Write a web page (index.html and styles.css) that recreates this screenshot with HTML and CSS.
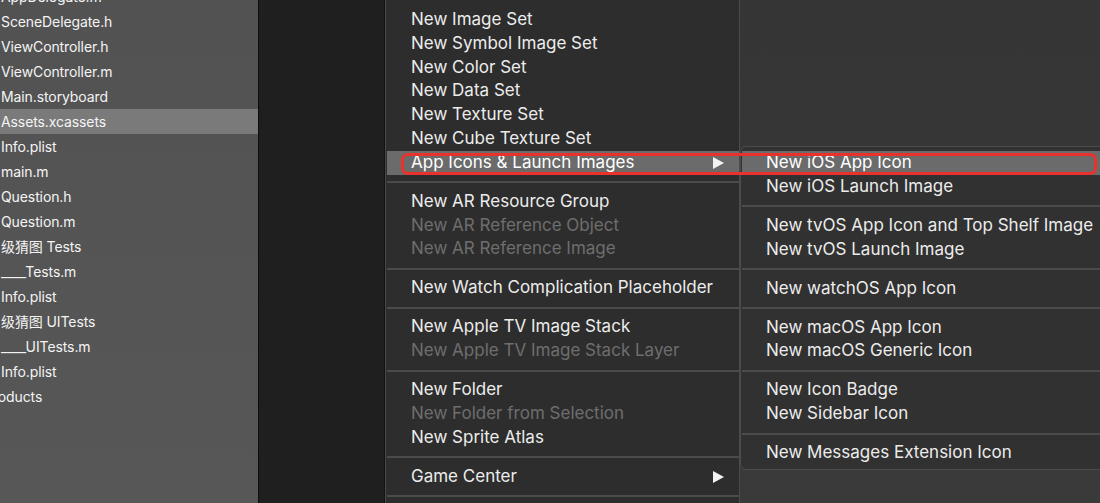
FILE: index.html
```html
<!DOCTYPE html>
<html lang="en">
<head>
<meta charset="utf-8">
<title>Xcode asset catalog context menu</title>
<link rel="stylesheet" href="styles.css">
</head>
<body>
<div class="screen">
  <aside class="sidebar">
    <ul class="files">
      <li class="file">AppDelegate.m</li>
      <li class="file">SceneDelegate.h</li>
      <li class="file">ViewController.h</li>
      <li class="file">ViewController.m</li>
      <li class="file">Main.storyboard</li>
      <li class="file selected">Assets.xcassets</li>
      <li class="file">Info.plist</li>
      <li class="file">main.m</li>
      <li class="file">Question.h</li>
      <li class="file">Question.m</li>
      <li class="file">级猜图 Tests</li>
      <li class="file">____Tests.m</li>
      <li class="file">Info.plist</li>
      <li class="file">级猜图 UITests</li>
      <li class="file">____UITests.m</li>
      <li class="file">Info.plist</li>
      <li class="file"><span class="cut">Products</span></li>
    </ul>
  </aside>
  <div class="divider"></div>
  <div class="gutter"></div>
  <div class="menu">
    <div class="item">New Image Set</div>
    <div class="item">New Symbol Image Set</div>
    <div class="item">New Color Set</div>
    <div class="item">New Data Set</div>
    <div class="item">New Texture Set</div>
    <div class="item">New Cube Texture Set</div>
    <div class="item active"><span>App Icons &amp; Launch Images</span><svg class="arrow" width="11" height="12" viewBox="0 0 11 12"><path d="M0 0 L11 6 L0 12 Z" fill="#f2f2f2"/></svg></div>
    <div class="sep"></div>
    <div class="item">New AR Resource Group</div>
    <div class="item disabled">New AR Reference Object</div>
    <div class="item disabled">New AR Reference Image</div>
    <div class="sep"></div>
    <div class="item">New Watch Complication Placeholder</div>
    <div class="sep"></div>
    <div class="item">New Apple TV Image Stack</div>
    <div class="item disabled">New Apple TV Image Stack Layer</div>
    <div class="sep"></div>
    <div class="item">New Folder</div>
    <div class="item disabled">New Folder from Selection</div>
    <div class="item">New Sprite Atlas</div>
    <div class="sep"></div>
    <div class="item"><span>Game Center</span><svg class="arrow" width="11" height="12" viewBox="0 0 11 12"><path d="M0 0 L11 6 L0 12 Z" fill="#f2f2f2"/></svg></div>
    <div class="sep"></div>
    <div class="item">&nbsp;</div>
  </div>
  <div class="right">
    <div class="submenu">
      <div class="item active">New iOS App Icon</div>
      <div class="item">New iOS Launch Image</div>
      <div class="sep"></div>
      <div class="item">New tvOS App Icon and Top Shelf Image</div>
      <div class="item">New tvOS Launch Image</div>
      <div class="sep"></div>
      <div class="item">New watchOS App Icon</div>
      <div class="sep"></div>
      <div class="item">New macOS App Icon</div>
      <div class="item">New macOS Generic Icon</div>
      <div class="sep"></div>
      <div class="item">New Icon Badge</div>
      <div class="item">New Sidebar Icon</div>
      <div class="sep"></div>
      <div class="item">New Messages Extension Icon</div>
    </div>
  </div>
  <div class="callout"></div>
</div>
</body>
</html>
```
FILE: styles.css
```css
* { box-sizing: border-box; }
html, body { margin: 0; padding: 0; }
body {
  width: 1100px;
  height: 503px;
  overflow: hidden;
  background: #1f1f1f;
  font-family: Inter, "Noto Sans CJK SC", "Liberation Sans", sans-serif;
  -webkit-font-smoothing: antialiased;
}
.screen {
  position: relative;
  display: flex;
  width: 1100px;
  height: 503px;
  overflow: hidden;
}
.sidebar {
  width: 258px;
  flex: none;
  background: linear-gradient(180deg, #525252 0%, #575757 100%);
  overflow: hidden;
}
.files {
  list-style: none;
  margin: -16px 0 0 0;
  padding: 0;
}
.file {
  height: 25px;
  line-height: 25px;
  font-size: 14px;
  color: #f4f4f4;
  padding-left: 1px;
  white-space: nowrap;
  letter-spacing: -0.1px;
}
.file.selected { background: #7a7a7a; }
.cut { margin-left: -17px; }
.divider { width: 1px; flex: none; background: #0d0d0d; }
.gutter { width: 125px; flex: none; background: #1f1f1f; }
.menu {
  width: 356px;
  flex: none;
  background: #2d2d2d;
  border-left: 1px solid #131313;
  box-shadow: inset 1px 0 0 #4a4a4a, inset -1px 0 0 #4a4a4a;
  padding: 8px 1px 0 2px;
}
.item {
  height: 23.8px;
  line-height: 23.8px;
  font-size: 17px;
  color: #ececec;
  padding-left: 24px;
  padding-right: 15px;
  white-space: nowrap;
  display: flex;
  align-items: center;
  justify-content: space-between;
}
.item.disabled { color: #6e6e6e; }
.item.active { background: #6b6b6b; color: #ffffff; }
.arrow { flex: none; }
.sep {
  height: 15.2px;
  display: flex;
  align-items: center;
}
.sep::before {
  content: "";
  display: block;
  width: 100%;
  height: 2px;
  background: #4b4b4b;
}
.right {
  flex: 1;
  background: linear-gradient(180deg, #353535 0%, #3a3a3a 100%);
  padding-top: 146px;
  overflow: hidden;
}
.submenu {
  width: 380px;
  background: #313131;
  border: 1px solid #4c4c4c;
  border-radius: 6px;
  padding: 4px 0 4px 1px;
}
.submenu .item { padding-left: 24px; }
.callout {
  position: absolute;
  left: 401px;
  top: 153px;
  width: 696px;
  height: 22px;
  border: 3px solid #e8322b;
  border-radius: 7px;
}
```
